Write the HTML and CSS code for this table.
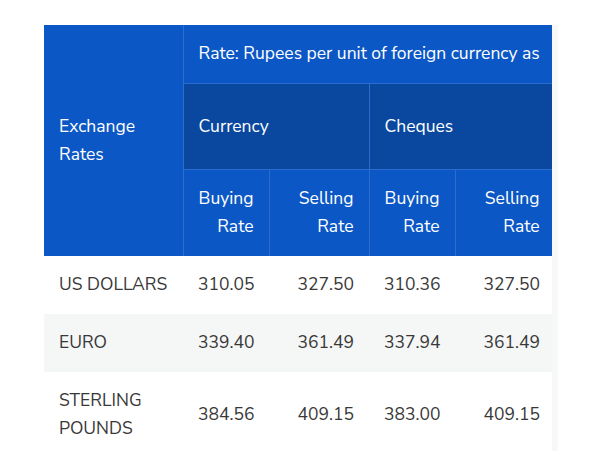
FILE: index.html
```html
<!DOCTYPE html>
<html>
<head>
<meta charset="utf-8">
<link rel="stylesheet" href="styles.css">
</head>
<body>
<div class="page">
  <div class="scroller">
    <table class="rates">
      <colgroup>
        <col class="w-name">
        <col class="w-buy">
        <col class="w-sell">
        <col class="w-buy">
        <col class="w-sell">
      </colgroup>
      <thead>
        <tr class="row-top">
          <th class="name-head" rowspan="3">Exchange<br>Rates</th>
          <th class="caption" colspan="4"><span class="nowrap">Rate: Rupees per unit of foreign currency as</span></th>
        </tr>
        <tr class="row-group">
          <th class="group" colspan="2">Currency</th>
          <th class="group" colspan="2">Cheques</th>
        </tr>
        <tr class="row-sub">
          <th class="sub">Buying<br>Rate</th>
          <th class="sub">Selling<br>Rate</th>
          <th class="sub">Buying<br>Rate</th>
          <th class="sub">Selling<br>Rate</th>
        </tr>
      </thead>
      <tbody>
        <tr class="row-data">
          <td class="name">US DOLLARS</td>
          <td class="num">310.05</td>
          <td class="num">327.50</td>
          <td class="num">310.36</td>
          <td class="num">327.50</td>
        </tr>
        <tr class="row-data alt">
          <td class="name">EURO</td>
          <td class="num">339.40</td>
          <td class="num">361.49</td>
          <td class="num">337.94</td>
          <td class="num">361.49</td>
        </tr>
        <tr class="row-data">
          <td class="name">STERLING<br>POUNDS</td>
          <td class="num">384.56</td>
          <td class="num">409.15</td>
          <td class="num">383.00</td>
          <td class="num">409.15</td>
        </tr>
      </tbody>
    </table>
  </div>
</div>
</body>
</html>
```
FILE: styles.css
```css
html, body {
  margin: 0;
  padding: 0;
  background: #ffffff;
}
.page {
  padding: 25px 0 0 44px;
  height: 426px;
  overflow: hidden;
  font-family: "Nunito Sans", "Open Sans", sans-serif;
  font-size: 17.5px;
  line-height: 28px;
}
.scroller {
  width: 508px;
  overflow: hidden;
  border-right: 6px solid #f7f8f8;
}
.rates {
  border-collapse: collapse;
  table-layout: fixed;
  width: 511px;
}
.w-name { width: 139px; }
.w-buy { width: 86px; }
.w-sell { width: 100px; }
.rates th {
  background: #0b57c5;
  color: #ffffff;
  font-weight: 400;
  padding: 14px 15px 16px;
  text-align: left;
  vertical-align: middle;
  border: 1px solid #2b6ccf;
}
.rates th.name-head {
  border-left: none;
  border-top: none;
  border-bottom: none;
}
.rates .caption {
  border-top: none;
  border-right: none;
  height: 28px;
  box-sizing: content-box;
}
.nowrap { white-space: nowrap; }
.rates th.group {
  background: #0a479f;
  height: 55px;
}
.rates th.sub {
  text-align: right;
  border-bottom: none;
}
.rates td {
  padding: 14px 15px 16px;
  color: #383838;
  vertical-align: middle;
}
.rates td.num { text-align: right; }
.alt td { background: #f5f6f6; }
```
